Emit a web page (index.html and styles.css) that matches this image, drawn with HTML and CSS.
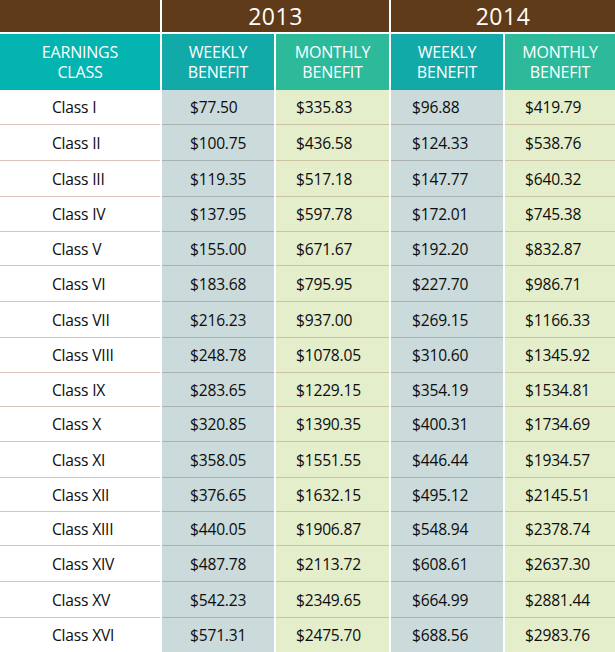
FILE: index.html
```html
<!DOCTYPE html>
<html>
<head>
<meta charset="utf-8">
<link rel="stylesheet" href="styles.css">
</head>
<body>
<div class="table">
  <div class="years">
    <div class="year blank"></div>
    <div class="year">2013</div>
    <div class="year">2014</div>
  </div>
  <div class="head">
    <div class="hcell earn">EARNINGS<br>CLASS</div>
    <div class="hcell wk">WEEKLY<br>BENEFIT</div>
    <div class="hcell mo">MONTHLY<br>BENEFIT</div>
    <div class="hcell wk">WEEKLY<br>BENEFIT</div>
    <div class="hcell mo">MONTHLY<br>BENEFIT</div>
  </div>
  <div class="body">
    <div class="row"><div class="c cls">Class I</div><div class="c w1">$77.50</div><div class="c m1">$335.83</div><div class="c w2">$96.88</div><div class="c m2">$419.79</div></div>
    <div class="row"><div class="c cls">Class II</div><div class="c w1">$100.75</div><div class="c m1">$436.58</div><div class="c w2">$124.33</div><div class="c m2">$538.76</div></div>
    <div class="row"><div class="c cls">Class III</div><div class="c w1">$119.35</div><div class="c m1">$517.18</div><div class="c w2">$147.77</div><div class="c m2">$640.32</div></div>
    <div class="row"><div class="c cls">Class IV</div><div class="c w1">$137.95</div><div class="c m1">$597.78</div><div class="c w2">$172.01</div><div class="c m2">$745.38</div></div>
    <div class="row"><div class="c cls">Class V</div><div class="c w1">$155.00</div><div class="c m1">$671.67</div><div class="c w2">$192.20</div><div class="c m2">$832.87</div></div>
    <div class="row"><div class="c cls">Class VI</div><div class="c w1">$183.68</div><div class="c m1">$795.95</div><div class="c w2">$227.70</div><div class="c m2">$986.71</div></div>
    <div class="row"><div class="c cls">Class VII</div><div class="c w1">$216.23</div><div class="c m1">$937.00</div><div class="c w2">$269.15</div><div class="c m2">$1166.33</div></div>
    <div class="row"><div class="c cls">Class VIII</div><div class="c w1">$248.78</div><div class="c m1">$1078.05</div><div class="c w2">$310.60</div><div class="c m2">$1345.92</div></div>
    <div class="row"><div class="c cls">Class IX</div><div class="c w1">$283.65</div><div class="c m1">$1229.15</div><div class="c w2">$354.19</div><div class="c m2">$1534.81</div></div>
    <div class="row"><div class="c cls">Class X</div><div class="c w1">$320.85</div><div class="c m1">$1390.35</div><div class="c w2">$400.31</div><div class="c m2">$1734.69</div></div>
    <div class="row"><div class="c cls">Class XI</div><div class="c w1">$358.05</div><div class="c m1">$1551.55</div><div class="c w2">$446.44</div><div class="c m2">$1934.57</div></div>
    <div class="row"><div class="c cls">Class XII</div><div class="c w1">$376.65</div><div class="c m1">$1632.15</div><div class="c w2">$495.12</div><div class="c m2">$2145.51</div></div>
    <div class="row"><div class="c cls">Class XIII</div><div class="c w1">$440.05</div><div class="c m1">$1906.87</div><div class="c w2">$548.94</div><div class="c m2">$2378.74</div></div>
    <div class="row"><div class="c cls">Class XIV</div><div class="c w1">$487.78</div><div class="c m1">$2113.72</div><div class="c w2">$608.61</div><div class="c m2">$2637.30</div></div>
    <div class="row"><div class="c cls">Class XV</div><div class="c w1">$542.23</div><div class="c m1">$2349.65</div><div class="c w2">$664.99</div><div class="c m2">$2881.44</div></div>
    <div class="row"><div class="c cls">Class XVI</div><div class="c w1">$571.31</div><div class="c m1">$2475.70</div><div class="c w2">$688.56</div><div class="c m2">$2983.76</div></div>
  </div>
</div>
</body>
</html>
```

FILE: styles.css
```css
* { box-sizing: border-box; }
html, body { margin: 0; padding: 0; background: #ffffff; }
body {
  font-family: "Open Sans", "Liberation Sans", sans-serif;
  color: #0d0d0d;
  width: 615px;
  height: 652px;
  overflow: hidden;
}
.table { width: 615px; }

.years {
  display: grid;
  grid-template-columns: 160px 227px 224px;
  column-gap: 2px;
  height: 32px;
}
.year {
  background: #5f3b19;
  color: #ffffff;
  font-size: 23px;
  line-height: 32px;
  text-align: center;
  letter-spacing: 0.5px;
}

.head, .row {
  display: grid;
  grid-template-columns: 160px 112px 113px 112px 110px;
  column-gap: 2px;
}
.head {
  margin-top: 2px;
  height: 56px;
}
.hcell {
  color: #ffffff;
  font-size: 16px;
  line-height: 20px;
  text-align: center;
  display: flex;
  align-items: center;
  justify-content: center;
  letter-spacing: -0.2px;
}
.hcell.earn { background: #03b4b1; }
.hcell.wk { background: #12aaa9; }
.hcell.mo { background: #2dba9b; }

.row { height: 35px; }
.c {
  display: flex;
  align-items: center;
  font-size: 15.6px;
  letter-spacing: -0.2px;
}
.row + .row .c { border-top: 1px solid #dcc2ba; }
.row + .row .w1, .row + .row .w2 { border-top-color: #aab3b3; }
.row + .row .m1, .row + .row .m2 { border-top-color: #cbc3a4; }

.cls { background: #ffffff; padding-left: 52px; }
.w1 { background: #cbdadb; padding-left: 28px; }
.m1 { background: #e4eecb; padding-left: 20px; }
.w2 { background: #cbdadb; padding-left: 21px; }
.m2 { background: #e4eecb; padding-left: 20px; }

.row:nth-child(1) { height: 34px; }
.row:nth-child(2) { height: 36px; }
.row:nth-child(3) { height: 36px; }
.row:nth-child(4) { height: 35px; }
.row:nth-child(5) { height: 34px; }
.row:nth-child(6) { height: 36px; }
.row:nth-child(7) { height: 36px; }
.row:nth-child(8) { height: 35px; }
.row:nth-child(9) { height: 34px; }
.row:nth-child(10) { height: 35px; }
.row:nth-child(11) { height: 36px; }
.row:nth-child(12) { height: 34px; }
.row:nth-child(13) { height: 34px; }
.row:nth-child(14) { height: 36px; }
.row:nth-child(15) { height: 36px; }
.row:nth-child(16) { height: 35px; }
```
